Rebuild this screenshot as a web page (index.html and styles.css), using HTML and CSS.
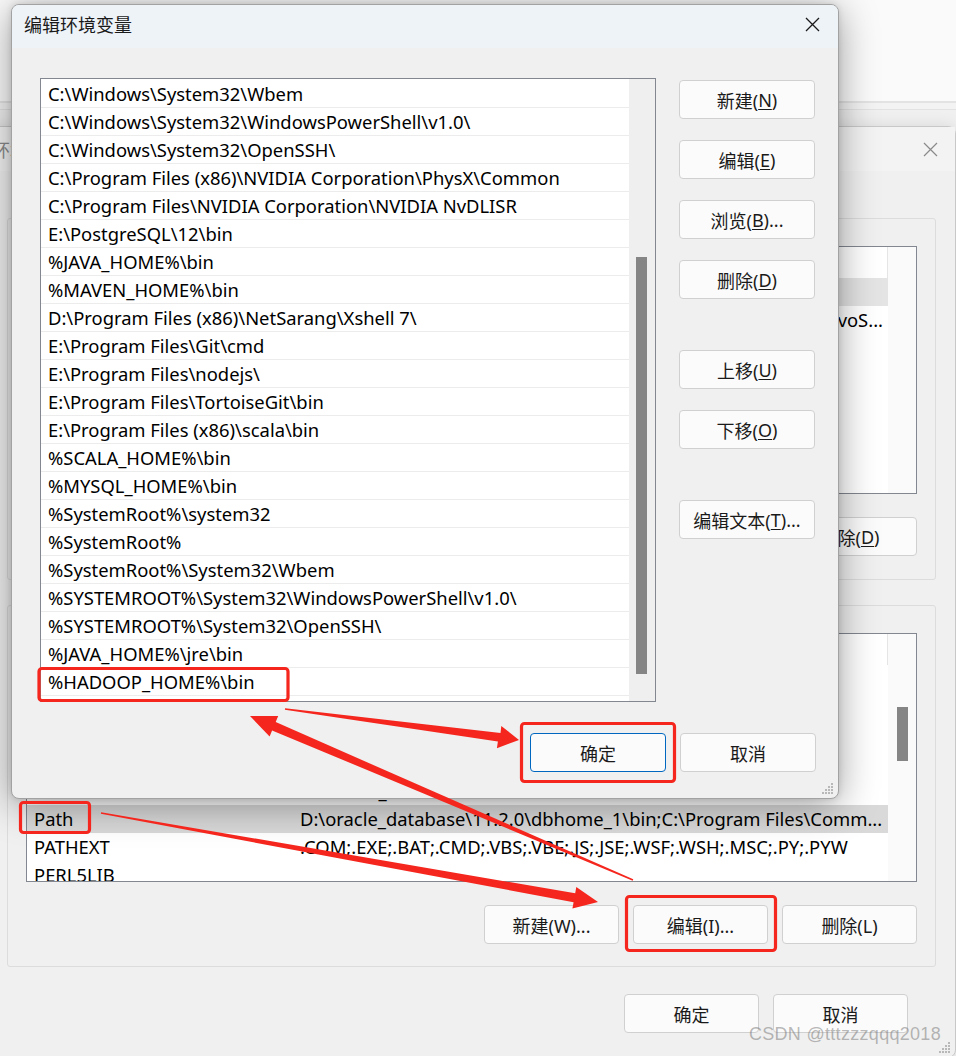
FILE: index.html
```html
<!DOCTYPE html>
<html>
<head>
    <meta charset="utf-8">
    <title>编辑环境变量</title>
    <link rel="stylesheet" href="styles.css">
</head>

<body>
<div class="desk">

    <!-- window far behind -->
    <div class="win win-back"></div>

    <!-- 环境变量 dialog (behind, mostly covered) -->
    <div class="win win-env">
        <div class="titlebar titlebar-dim">
            <span class="title">环境变量</span>
            <span class="close close-dim">
                <svg width="15" height="15" viewBox="0 0 15 15"><path d="M1 1L14 14M14 1L1 14" stroke="#8a8a8a" stroke-width="1.2" fill="none"/></svg>
            </span>
        </div>
        <div class="env-body">
            <div class="group">
                <div class="lv lv-user">
                    <div class="lv-main">
                        <div class="lv-head"><span class="lv-name"></span><span class="lv-val"></span></div>
                        <div class="lv-row is-sel"><span class="lv-name"></span><span class="lv-val"></span></div>
                        <div class="lv-row"><span class="lv-name"></span><span class="lv-val lv-val-end"><span>E:\Program Files\LenovoS...</span></span></div>
                    </div>
                    <div class="lv-scroll"></div>
                </div>
                <div class="group-btns">
                    <button class="btn"></button>
                    <button class="btn"></button>
                    <button class="btn">删除(<u>D</u>)</button>
                </div>
            </div>

            <div class="group group-sys">
                <div class="lv lv-sys">
                    <div class="lv-main">
                        <div class="lv-head"><span class="lv-name"></span><span class="lv-val"></span></div>
                        <div class="lv-row"></div>
                        <div class="lv-row"></div>
                        <div class="lv-row"></div>
                        <div class="lv-row"></div>
                        <div class="lv-row"><span class="lv-name">OS</span><span class="lv-val">Windows_NT</span></div>
                        <div class="lv-row is-sel-dark"><span class="lv-name">Path</span><span class="lv-val">D:\oracle_database\11.2.0\dbhome_1\bin;C:\Program Files\Comm...</span></div>
                        <div class="lv-row"><span class="lv-name">PATHEXT</span><span class="lv-val">.COM;.EXE;.BAT;.CMD;.VBS;.VBE;.JS;.JSE;.WSF;.WSH;.MSC;.PY;.PYW</span></div>
                        <div class="lv-row"><span class="lv-name">PERL5LIB</span><span class="lv-val"></span></div>
                    </div>
                    <div class="lv-scroll"><div class="lv-thumb"></div></div>
                </div>
                <div class="group-btns">
                    <button class="btn">新建(W)...</button>
                    <button class="btn">编辑(I)...</button>
                    <button class="btn">删除(L)</button>
                </div>
            </div>

            <div class="env-foot">
                <button class="btn">确定</button>
                <button class="btn">取消</button>
            </div>
        </div>
        <svg class="grip" width="12" height="12" viewBox="0 0 12 12" fill="#b8b8b8">
            <rect x="9" y="0" width="2" height="2"/>
            <rect x="6" y="3" width="2" height="2"/><rect x="9" y="3" width="2" height="2"/>
            <rect x="3" y="6" width="2" height="2"/><rect x="6" y="6" width="2" height="2"/><rect x="9" y="6" width="2" height="2"/>
            <rect x="0" y="9" width="2" height="2"/><rect x="3" y="9" width="2" height="2"/><rect x="6" y="9" width="2" height="2"/><rect x="9" y="9" width="2" height="2"/>
        </svg>
    </div>

    <!-- 编辑环境变量 dialog (front) -->
    <div class="win win-edit">
        <div class="titlebar">
            <span class="title">编辑环境变量</span>
            <span class="close">
                <svg width="15" height="15" viewBox="0 0 15 15"><path d="M1 1L14 14M14 1L1 14" stroke="#1a1a1a" stroke-width="1.3" fill="none"/></svg>
            </span>
        </div>
        <div class="edit-body">
            <div class="edit-main">
                <div class="pl">
                    <div class="pl-rows">
                        <div class="pl-row">C:\Windows\System32\Wbem</div>
                        <div class="pl-row">C:\Windows\System32\WindowsPowerShell\v1.0\</div>
                        <div class="pl-row">C:\Windows\System32\OpenSSH\</div>
                        <div class="pl-row">C:\Program Files (x86)\NVIDIA Corporation\PhysX\Common</div>
                        <div class="pl-row">C:\Program Files\NVIDIA Corporation\NVIDIA NvDLISR</div>
                        <div class="pl-row">E:\PostgreSQL\12\bin</div>
                        <div class="pl-row">%JAVA_HOME%\bin</div>
                        <div class="pl-row">%MAVEN_HOME%\bin</div>
                        <div class="pl-row">D:\Program Files (x86)\NetSarang\Xshell 7\</div>
                        <div class="pl-row">E:\Program Files\Git\cmd</div>
                        <div class="pl-row">E:\Program Files\nodejs\</div>
                        <div class="pl-row">E:\Program Files\TortoiseGit\bin</div>
                        <div class="pl-row">E:\Program Files (x86)\scala\bin</div>
                        <div class="pl-row">%SCALA_HOME%\bin</div>
                        <div class="pl-row">%MYSQL_HOME%\bin</div>
                        <div class="pl-row">%SystemRoot%\system32</div>
                        <div class="pl-row">%SystemRoot%</div>
                        <div class="pl-row">%SystemRoot%\System32\Wbem</div>
                        <div class="pl-row">%SYSTEMROOT%\System32\WindowsPowerShell\v1.0\</div>
                        <div class="pl-row">%SYSTEMROOT%\System32\OpenSSH\</div>
                        <div class="pl-row">%JAVA_HOME%\jre\bin</div>
                        <div class="pl-row">%HADOOP_HOME%\bin</div>
                    </div>
                    <div class="pl-track"><div class="pl-thumb"></div></div>
                </div>
                <div class="edit-side">
                    <button class="btn btn-side">新建(<u>N</u>)</button>
                    <button class="btn btn-side">编辑(<u>E</u>)</button>
                    <button class="btn btn-side">浏览(<u>B</u>)...</button>
                    <button class="btn btn-side">删除(<u>D</u>)</button>
                    <button class="btn btn-side btn-split">上移(<u>U</u>)</button>
                    <button class="btn btn-side">下移(<u>O</u>)</button>
                    <button class="btn btn-side btn-split">编辑文本(<u>T</u>)...</button>
                </div>
            </div>
            <div class="edit-foot">
                <button class="btn btn-side btn-default">确定</button>
                <button class="btn btn-side">取消</button>
            </div>
        </div>
        <svg class="grip" width="12" height="12" viewBox="0 0 12 12" fill="#b8b8b8">
            <rect x="9" y="0" width="2" height="2"/>
            <rect x="6" y="3" width="2" height="2"/><rect x="9" y="3" width="2" height="2"/>
            <rect x="3" y="6" width="2" height="2"/><rect x="6" y="6" width="2" height="2"/><rect x="9" y="6" width="2" height="2"/>
            <rect x="0" y="9" width="2" height="2"/><rect x="3" y="9" width="2" height="2"/><rect x="6" y="9" width="2" height="2"/><rect x="9" y="9" width="2" height="2"/>
        </svg>
    </div>

    <!-- red annotations -->
    <svg class="marks" width="956" height="1056" viewBox="0 0 956 1056">
        <g fill="none" stroke="#f5261d" stroke-width="3.2">
            <rect x="39" y="668.5" width="249" height="32" rx="3"/>
            <rect x="521.5" y="723.5" width="153" height="58" rx="3"/>
            <rect x="20.5" y="802.5" width="69" height="30" rx="3"/>
            <rect x="626.5" y="896.5" width="149" height="54" rx="3"/>
        </g>
        <g fill="#f5261d">
            <polygon points="284.9,709.8 497.9,741.5 496.9,748.2 519,740 501.3,725.9 500.5,733.1 285.1,708.2"/>
            <polygon points="633.3,879.3 275.7,722.1 278.2,716.1 250,716 269.6,736.4 272.1,730.4 632.7,880.7"/>
            <polygon points="100.9,813.8 573.6,902.2 572.4,908.6 598,902 576.3,886.9 575.2,893.3 101.1,812.2"/>
        </g>
    </svg>

    <div class="watermark">CSDN @tttzzzqqq2018</div>
</div>
</body>

</html>
```

FILE: styles.css
```css
* {
    box-sizing: border-box;
}

body {
    margin: 0;
    background: #f0f0f0;
    font-family: "Noto Sans", "Noto Sans CJK SC", sans-serif;
    color: #1a1a1a;
}

.desk {
    position: relative;
    width: 956px;
    height: 1056px;
    overflow: hidden;
}

/* windows on the desktop */

.win {
    position: absolute;
    background: #f0f0f0;
}

.win-back {
    left: -10px;
    top: -10px;
    width: 1000px;
    height: 113px;
    background: #fafafa;
    border-bottom: 2px solid #e3e3e3;
    box-shadow: 0 6px 0 #f3f3f3, 0 7px 0 #e2e2e2;
}

.win-env {
    left: -22px;
    top: 126px;
    width: 978px;
    height: 932px;
    border: 1px solid #c8c8c8;
    border-radius: 8px;
    box-shadow: 0 0 16px rgba(0, 0, 0, 0.1);
}

.win-edit {
    left: 11px;
    top: 4px;
    width: 828px;
    height: 795px;
    border: 1px solid #a2a2a2;
    border-radius: 8px;
    box-shadow: 0 6px 38px rgba(0, 0, 0, 0.38), 0 0 6px rgba(0, 0, 0, 0.12);
    overflow: hidden;
}

.titlebar {
    display: flex;
    align-items: center;
    justify-content: space-between;
    height: 43px;
    padding: 0 18px 5px 12px;
    background: #eef3f8;
}

.titlebar .title {
    font-family: "Noto Sans CJK SC", sans-serif;
    font-size: 18px;
}

.close svg {
    display: block;
}

.titlebar-dim {
    height: 44px;
    padding: 0 17px 0 13px;
    background: #f3f3f3;
}

.titlebar-dim .title {
    color: #8a8a8a;
}

/* buttons */

.btn {
    display: flex;
    align-items: center;
    justify-content: center;
    width: 135px;
    height: 39px;
    padding: 0;
    border: 1px solid #d0d0d0;
    border-radius: 4px;
    background: #fbfbfb;
    font-family: "Noto Sans", "Noto Sans CJK SC", sans-serif;
    font-size: 18px;
    color: #1a1a1a;
}

.btn u {
    text-underline-offset: 2px;
}

.btn-side {
    width: 136px;
}

.btn-default {
    border-color: #0067c0;
}

.grip {
    position: absolute;
    right: 4px;
    bottom: 3px;
}

/* 环境变量 */

.env-body {
    padding: 47px 19px 0 28px;
}

.group {
    height: 362px;
    padding: 27px 18px 0 18px;
    border: 1px solid #dcdcdc;
    border-radius: 3px;
}

.group-sys {
    margin-top: 25px;
}

.lv {
    display: flex;
    height: 248px;
    border: 1px solid #828790;
    background: #fff;
    overflow: hidden;
    font-size: 18.4px;
    color: #000;
}

.lv-sys {
    height: 249px;
}

.lv-main {
    flex: 1;
    min-width: 0;
}

.lv-head {
    display: flex;
    height: 31px;
}

.lv-head .lv-val {
    border-right: 1px solid #e5e5e5;
}

.lv-row {
    display: flex;
    height: 28px;
    line-height: 28px;
}

.lv-name {
    width: 273px;
    padding-left: 7px;
    white-space: nowrap;
}

.lv-val {
    flex: 1;
    min-width: 0;
    padding-right: 8px;
    white-space: nowrap;
    overflow: hidden;
}

.lv-val-end {
    display: flex;
    justify-content: flex-end;
    padding-right: 5px;
}

.is-sel {
    background: #e4e4e4;
}

.is-sel-dark {
    background: #d9d9d9;
}

.lv-scroll {
    width: 28px;
    background: #fafafa;
}

.lv-thumb {
    width: 11px;
    height: 54px;
    margin: 73px 0 0 9px;
    background: #858585;
}

.group-btns {
    display: flex;
    justify-content: flex-end;
    gap: 13px;
    margin-top: 23px;
}

.group-sys .group-btns {
    gap: 14px;
}

.env-foot {
    display: flex;
    justify-content: flex-end;
    gap: 14px;
    margin-top: 27px;
    padding-right: 28px;
}

/* 编辑环境变量 */

.edit-body {
    padding: 30px 22px 0 28px;
}

.edit-main {
    display: flex;
    gap: 23px;
}

.pl {
    display: flex;
    width: 616px;
    height: 624px;
    border: 1px solid #828790;
    background: #fff;
}

.pl-rows {
    flex: 1;
    min-width: 0;
    padding-top: 1px;
}

.pl-row {
    height: 28px;
    line-height: 27px;
    padding-left: 7px;
    border-bottom: 1px solid #ececec;
    font-size: 18.4px;
    color: #000;
    white-space: nowrap;
    overflow: hidden;
}

.pl-track {
    width: 26px;
    background: #efefef;
}

.pl-thumb {
    width: 11px;
    height: 417px;
    margin: 178px 0 0 7px;
    background: #858585;
}

.edit-side {
    display: flex;
    flex-direction: column;
    gap: 21px;
    padding-top: 2px;
}

.btn-split {
    margin-top: 30px;
}

.edit-foot {
    display: flex;
    justify-content: flex-end;
    gap: 14px;
    margin-top: 31px;
}

/* annotations */

.marks {
    position: absolute;
    left: 0;
    top: 0;
}

.watermark {
    position: absolute;
    right: 15px;
    bottom: 11px;
    font-family: "Liberation Sans", sans-serif;
    font-size: 18px;
    color: rgba(125, 125, 125, 0.55);
    letter-spacing: 0.3px;
}
```
